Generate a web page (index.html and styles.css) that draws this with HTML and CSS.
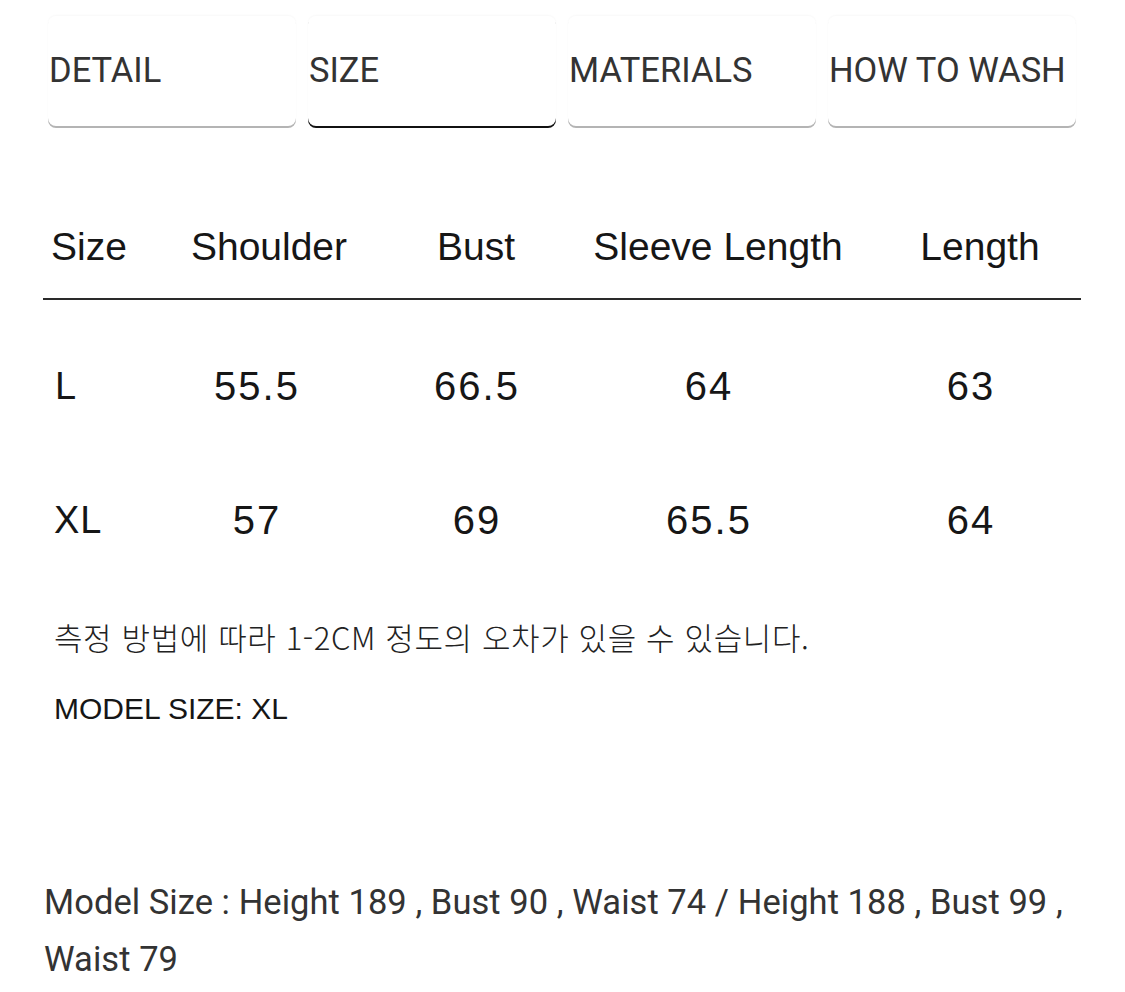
FILE: index.html
```html
<!DOCTYPE html>
<html lang="ko">
<head>
<meta charset="utf-8">
<title>Size</title>
<link rel="stylesheet" href="styles.css">
</head>
<body>
<div class="page">
  <nav class="tabs">
    <div class="tab">DETAIL</div>
    <div class="tab active">SIZE</div>
    <div class="tab">MATERIALS</div>
    <div class="tab">HOW TO WASH</div>
  </nav>

  <section class="size-table">
    <div class="row head">
      <div class="cell first">Size</div>
      <div class="cell">Shoulder</div>
      <div class="cell">Bust</div>
      <div class="cell">Sleeve Length</div>
      <div class="cell">Length</div>
    </div>
    <div class="rule"></div>
    <div class="row data row-l">
      <div class="cell first">L</div>
      <div class="cell">55.5</div>
      <div class="cell">66.5</div>
      <div class="cell">64</div>
      <div class="cell">63</div>
    </div>
    <div class="row data row-xl">
      <div class="cell first">XL</div>
      <div class="cell">57</div>
      <div class="cell">69</div>
      <div class="cell">65.5</div>
      <div class="cell">64</div>
    </div>
  </section>

  <p class="note">측정 방법에 따라 1-2CM 정도의 오차가 있을 수 있습니다.</p>
  <p class="model">MODEL SIZE: XL</p>

  <p class="model-info">Model Size : Height 189 , Bust 90 , Waist 74 / Height 188 , Bust 99 , Waist 79</p>
</div>
</body>
</html>
```

FILE: styles.css
```css
html, body {
  margin: 0;
  padding: 0;
  background: #ffffff;
}

.page {
  width: 1125px;
  padding-top: 16px;
}

.tabs {
  display: flex;
  gap: 12px;
  padding-left: 48px;
}

.tab {
  width: 248px;
  height: 110px;
  box-sizing: border-box;
  border-radius: 8px;
  background: #fff;
  box-shadow: 0 2px 0 #b4b4b4, 0 -1px 2px rgba(0,0,0,0.03);
  display: flex;
  align-items: center;
  padding-left: 1px;
  padding-bottom: 2px;
  font-family: Roboto, "Liberation Sans", sans-serif;
  font-size: 34.5px;
  color: #333;
}

.tab.active {
  box-shadow: 0 2px 0 #111, 0 -1px 2px rgba(0,0,0,0.03);
}

.size-table {
  margin-top: 98px;
  font-family: "Liberation Sans", Arial, sans-serif;
  color: #161616;
}

.row {
  display: grid;
  margin-left: 43px;
}

.head {
  grid-template-columns: 131px 190px 224px 260px 264px;
}

.data {
  grid-template-columns: 117px 192px 248px 216px 308px;
}

.cell {
  text-align: center;
  white-space: nowrap;
}

.head .cell {
  font-size: 39px;
  line-height: 46px;
}

.head .first {
  text-align: left;
  padding-left: 8px;
}

.rule {
  margin: 28px 0 0 43px;
  width: 1038px;
  height: 2px;
  background: #2a2a2a;
}

.data .cell {
  font-size: 40px;
  line-height: 46px;
  letter-spacing: 2px;
  padding-left: 2px;
}

.data .first {
  text-align: left;
  padding-left: 12px;
  letter-spacing: 1px;
  font-size: 38px;
}

.row-xl .first {
  padding-left: 11px;
}

.row-l {
  margin-top: 63px;
}

.row-xl {
  margin-top: 88px;
}

.note {
  margin: 72px 0 0 54px;
  font-family: "Noto Sans CJK KR", sans-serif;
  font-weight: 300;
  font-size: 31px;
  line-height: 44px;
  color: #222;
  letter-spacing: 0.6px;
}

.model {
  margin: 30px 0 0 54px;
  font-family: "Liberation Sans", Arial, sans-serif;
  font-size: 30px;
  line-height: 40px;
  color: #161616;
}

.model-info {
  margin: 145px 0 0 44px;
  width: 1040px;
  font-family: Roboto, "Liberation Sans", sans-serif;
  font-size: 34.5px;
  line-height: 57px;
  color: #333;
  letter-spacing: 0.05px;
}
```
